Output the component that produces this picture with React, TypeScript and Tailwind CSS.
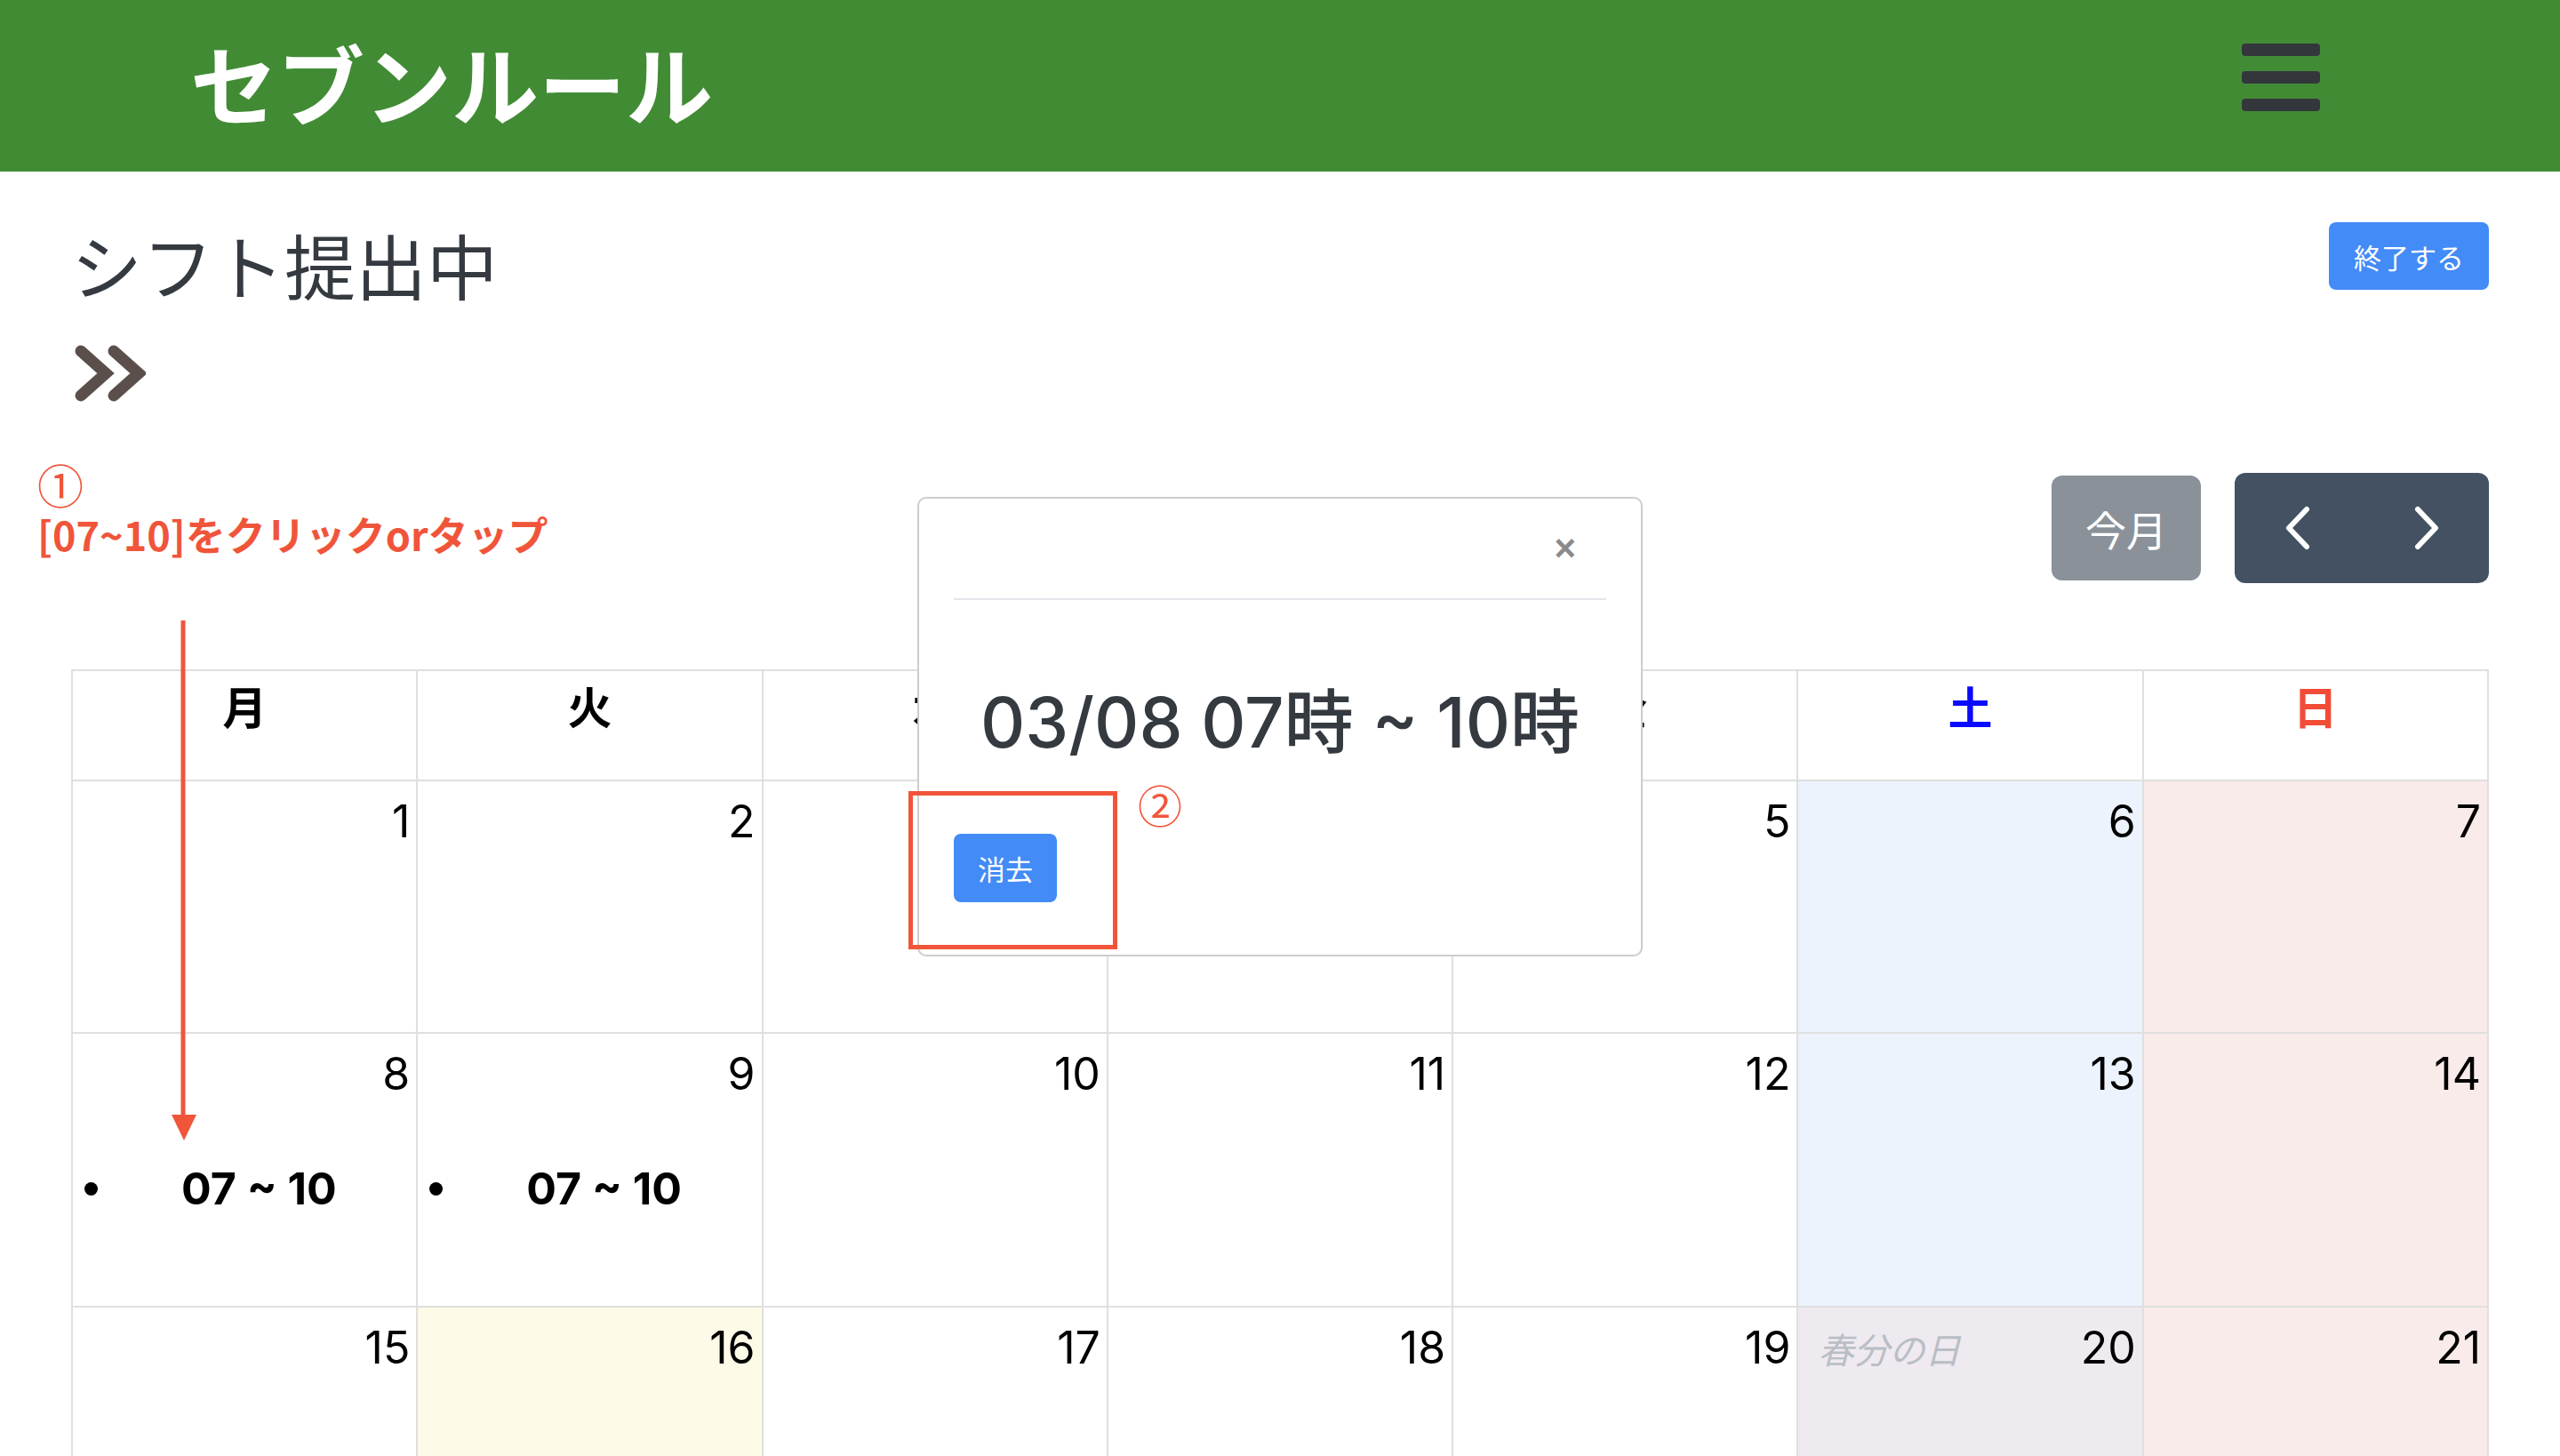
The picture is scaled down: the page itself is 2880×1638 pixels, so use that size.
import React from "react";

type Day = { d: number | null; bg: string; holiday?: string; events?: string[] };

const SAT = "bg-[#ecf3fd]";
const SUN = "bg-[#f9ebea]";
const WHITE = "bg-white";

function buildWeeks(): Day[][] {
  const weeks: Day[][] = [];
  let d = 1;
  for (let w = 0; w < 5; w++) {
    const row: Day[] = [];
    for (let c = 0; c < 7; c++) {
      const day = d <= 31 ? d : null;
      let bg = c === 5 ? SAT : c === 6 ? SUN : WHITE;
      let holiday: string | undefined;
      let events: string[] | undefined;
      if (day === 16) bg = "bg-[#fdfae7]";
      if (day === 20) {
        bg = "bg-[#efeaf0]";
        holiday = "春分の日";
      }
      if (day === 8 || day === 9) events = ["07 ~ 10"];
      row.push({ d: day, bg, holiday, events });
      d++;
    }
    weeks.push(row);
  }
  return weeks;
}

const rowHeights = ["h-[282px]", "h-[306px]", "h-[282px]", "h-[282px]", "h-[282px]"];

const weekdays: { label: string; color: string }[] = [
  { label: "月", color: "text-black" },
  { label: "火", color: "text-black" },
  { label: "水", color: "text-black" },
  { label: "木", color: "text-black" },
  { label: "金", color: "text-black" },
  { label: "土", color: "text-[#0a0aff]" },
  { label: "日", color: "text-[#f24b37]" },
];

export default function App() {
  const weeks = buildWeeks();
  return (
    <div className="relative min-h-screen w-full bg-white font-['Noto_Sans_CJK_JP',sans-serif]">
      <header className="flex h-[193px] items-center justify-between bg-[#428b35] pl-[214px] pr-[270px]">
        <h1 className="-mt-[12px] text-[98px] font-bold leading-none text-white">セブンルール</h1>
        <div className="-mt-[20px] flex flex-col gap-[17px]">
          <span className="block h-[14px] w-[88px] rounded-[4px] bg-[#33373c]" />
          <span className="block h-[14px] w-[88px] rounded-[4px] bg-[#33373c]" />
          <span className="block h-[14px] w-[88px] rounded-[4px] bg-[#33373c]" />
        </div>
      </header>

      <main className="px-[80px] pb-[40px]">
        <div className="mt-[57px] flex items-start justify-between">
          <h2 className="-mt-[2px] text-[80px] font-normal leading-[96px] text-[#343a40]">シフト提出中</h2>
          <button className="h-[76px] w-[180px] rounded-[8px] bg-[#438bf6] text-[31px] leading-none text-white">
            終了する
          </button>
        </div>

        <svg className="mt-[44px] ml-[4px] block" width="80" height="64" viewBox="0 0 80 64">
          <polyline points="7,7 35,32 7,57" fill="none" stroke="#5b4f4c" strokeWidth="13" strokeLinecap="round" strokeLinejoin="miter" />
          <polyline points="44,7 72,32 44,57" fill="none" stroke="#5b4f4c" strokeWidth="13" strokeLinecap="round" strokeLinejoin="miter" />
        </svg>

        <div className="mt-[67px] flex items-start justify-between">
          <div className="-ml-[38px] text-[#f0553a]">
            <div className="text-[52px] leading-[52px]">①</div>
            <div className="mt-[4px] text-[45px] font-bold leading-[52px]">[07~10]をクリックorタップ</div>
          </div>
          <div className="mt-[13px] flex items-center gap-[38px]">
            <button className="h-[118px] w-[168px] rounded-[12px] bg-[#8a9199] text-[46px] leading-none text-white">
              今月
            </button>
            <div className="flex h-[124px] w-[286px] overflow-hidden rounded-[12px] bg-[#435163]">
              <button className="flex flex-1 items-center justify-center">
                <svg width="32" height="50" viewBox="0 0 32 50">
                  <polyline points="25,4 5,25 25,46" fill="none" stroke="white" strokeWidth="6" strokeLinecap="round" strokeLinejoin="round" />
                </svg>
              </button>
              <button className="flex flex-1 items-center justify-center">
                <svg width="32" height="50" viewBox="0 0 32 50">
                  <polyline points="7,4 27,25 7,46" fill="none" stroke="white" strokeWidth="6" strokeLinecap="round" strokeLinejoin="round" />
                </svg>
              </button>
            </div>
          </div>
        </div>

        <div className="mt-[97px] grid grid-cols-7 gap-[2px] bg-[#dfdfdf] p-[2px]">
          {weekdays.map((w) => (
            <div key={w.label} className="flex h-[122px] justify-center bg-white pt-[8px]">
              <span className={`text-[50px] font-bold leading-[60px] ${w.color}`}>{w.label}</span>
            </div>
          ))}
          {weeks.map((row, ri) =>
            row.map((cell, ci) => (
              <div key={`${ri}-${ci}`} className={`flex flex-col ${rowHeights[ri]} ${cell.bg}`}>
                <div className="flex items-baseline justify-between pt-[15px] pr-[7px] pl-[22px]">
                  <span className="text-[40px] italic leading-[60px] text-[#b9bec5]">{cell.holiday ?? ""}</span>
                  <span className="font-['Inter',sans-serif] text-[50px] leading-[60px] text-black">{cell.d ?? ""}</span>
                </div>
                {cell.events?.map((e) => (
                  <div key={e} className="mt-[69px] flex items-center pl-[13px]">
                    <span className="block h-[15px] w-[15px] rounded-full bg-black" />
                    <span className="ml-[94px] font-['Inter',sans-serif] text-[50px] font-bold leading-[60px] text-black">{e}</span>
                  </div>
                ))}
              </div>
            ))
          )}
        </div>
      </main>

      {/* annotation arrow */}
      <svg className="absolute left-[190px] top-[698px]" width="34" height="586" viewBox="0 0 34 586">
        <line x1="16" y1="0" x2="16" y2="562" stroke="#f0553a" strokeWidth="5" />
        <polygon points="3,556 31,556 17,585" fill="#f0553a" />
      </svg>

      {/* modal */}
      <div className="absolute left-[1032px] top-[559px] h-[517px] w-[816px] rounded-[10px] border-2 border-[#cdcdcd] bg-white">
        <div className="mx-[39px] flex h-[114px] items-center justify-end border-b-2 border-[#e3e6ea] pr-[34px]">
          <span className="font-['Liberation_Sans',sans-serif] text-[42px] font-bold leading-none text-[#8a8a8a]">×</span>
        </div>
        <div className="px-[39px]">
          <div className="mt-[92px] text-center font-['Inter','Noto_Sans_CJK_JP',sans-serif] text-[78px] font-medium leading-[92px] text-[#343a40]">
            03/08 07時 ~ 10時
          </div>
          <button className="mt-[79px] h-[77px] w-[116px] rounded-[8px] bg-[#438bf6] text-[31px] leading-none text-white">
            消去
          </button>
        </div>
      </div>

      {/* annotation box */}
      <div className="absolute left-[1022px] top-[890px] h-[178px] w-[235px] border-[5px] border-[#f0553a]" />
      <div className="absolute left-[1280px] top-[876px] text-[50px] leading-[56px] text-[#f0553a]">②</div>
    </div>
  );
}
